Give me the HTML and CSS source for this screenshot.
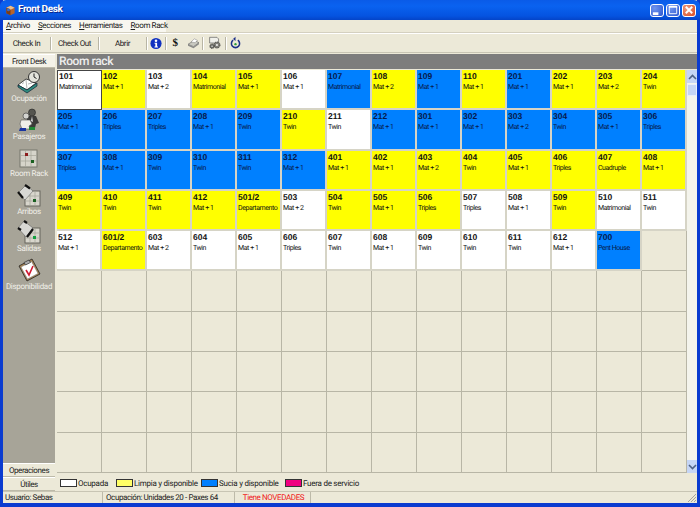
FILE: index.html
```html
<!DOCTYPE html>
<html lang="es">
<head>
<meta charset="utf-8">
<title>Front Desk</title>
<link rel="stylesheet" href="styles.css">
</head>
<body>
<div class="window">
  <header class="titlebar">
    <svg class="app-icon" width="11" height="13" viewBox="0 0 16 16"><path d="M2 4 8 1l6 3v8l-6 3-6-3z" fill="#b8642a"/><path d="M2 4l6 3 6-3-6-3z" fill="#e8c090"/><path d="M8 7v8l-6-3V4z" fill="#7a3d18"/><circle cx="5" cy="7" r="2.200" fill="#3c6bc0"/></svg>
    <span class="title-text">Front Desk</span>
    <div class="win-buttons">
      <span class="win-btn"><svg width="12" height="12" viewBox="0 0 13 13"><rect x="2" y="9" width="6" height="3" fill="#fff"/></svg></span>
      <span class="win-btn"><svg width="12" height="12" viewBox="0 0 13 13"><path d="M2.500 2.500h8v8h-8z" fill="none" stroke="#fff"/><path d="M2 3h9" stroke="#fff" stroke-width="2"/></svg></span>
      <span class="win-btn close"><svg width="12" height="12" viewBox="0 0 13 13"><path d="m3 3 7 7M10 3l-7 7" stroke="#fff" stroke-width="2"/></svg></span>
    </div>
  </header>
  <nav class="menubar">
    <div class="menu-items">
      <span><u>A</u>rchivo</span><span><u>S</u>ecciones</span><span><u>H</u>erramientas</span><span><u>R</u>oom Rack</span>
    </div>
  </nav>
  <div class="toolbar">
    <span class="tool tool-a">Check In</span><i class="sep"></i>
    <span class="tool tool-b">Check Out</span><i class="sep"></i>
    <span class="tool tool-c">Abrir</span><i class="sep"></i>
    <span class="ticon"><svg width="12" height="13" viewBox="0 0 14 14"><circle cx="7" cy="7" r="6.500" fill="#1030c0"/><circle cx="7" cy="3.700" r="1.500" fill="#fff"/><path d="M5.300 6h3v4.500h1v1.200H5.200v-1.200h1V7.200h-.9z" fill="#fff"/></svg></span><i class="sep"></i>
    <span class="ticon dollar">$</span>
    <span class="ticon"><svg width="13" height="11" viewBox="0 0 16 14"><path d="M1 8 9 3l6 3-7 5z" fill="#c8c8c0" stroke="#666" stroke-width=".8"/><path d="M5 5 9 1l4 2-3 3z" fill="#fff" stroke="#777" stroke-width=".6"/><path d="M1 8v2l7 3 7-5V6l-7 5z" fill="#8a8a88"/></svg></span><i class="sep"></i>
    <span class="ticon ticon-wide"><svg width="13" height="14" viewBox="0 0 16 16"><path d="M2 1h9l2 2v5H2z" fill="#f0f0ea" stroke="#555" stroke-width=".8"/><circle cx="11" cy="10.500" r="3.800" fill="#807f78" stroke="#333" stroke-dasharray="1.500 1"/><circle cx="11" cy="10.500" r="1.300" fill="#eee"/><circle cx="5" cy="12" r="2.800" fill="#6a6a64" stroke="#333" stroke-width=".8" stroke-dasharray="1.200 .8"/><circle cx="5" cy="12" r="1" fill="#ddd"/></svg></span><i class="sep"></i>
    <span class="ticon"><svg width="11" height="14" viewBox="0 0 14 16"><path d="M4 4.400a5.200 5.200 0 1 0 6 0" fill="none" stroke="#1c2f88" stroke-width="2"/><path d="M7 0v5.500L3.800 2.800z" fill="#1c2f88"/><circle cx="7" cy="9.500" r="1.500" fill="#2f9c3c"/></svg></span>
  </div>
  <div class="main">
    <aside class="sidebar">
      <div class="tab tab-top">Front Desk</div>
      <div class="side-list">
        <div class="side-item"><svg width="24" height="24" viewBox="0 0 24 24"><path d="M1 15 9 9l3 1 7 3-9 7z" fill="#fff" stroke="#222" stroke-width=".8"/><path d="M1 15v2l9 6 10-7v-3l-10 7z" fill="#2f8c80" stroke="#123" stroke-width=".7"/><path d="m9 10 1 9M5 14l2-1.500M11 14l4-1" stroke="#999" stroke-width=".7"/><circle cx="17" cy="7" r="5.500" fill="#e4e4dc" stroke="#333"/><path d="M17 3.500V7l2.500 1.500" fill="none" stroke="#222"/></svg><span>Ocupación</span></div>
        <div class="side-item"><svg width="24" height="24" viewBox="0 0 24 24"><circle cx="15" cy="4.500" r="3.500" fill="#55554f" stroke="#222" stroke-width=".6"/><path d="M10 8h9l3 7-3 1-1 4h-6l-2-6z" fill="#3a3a38"/><path d="M15 8l1 6-2-1z" fill="#ddd"/><circle cx="9" cy="8" r="3" fill="#d4d4d0" stroke="#333" stroke-width=".6"/><path d="M4 12h9l2 4-3 2 1 3H5l-2-5z" fill="#efefe9" stroke="#555" stroke-width=".6"/><path d="M3 20h6v3H2z" fill="#1a35a0"/><rect x="12" y="19" width="6" height="3" fill="#1e8a34"/></svg><span>Pasajeros</span></div>
        <div class="side-item"><svg width="24" height="24" viewBox="0 0 24 24"><rect x="3" y="5" width="17" height="17" fill="#d6d4ca" stroke="#77766c"/><path d="M3 10.500h17M3 16h17M8.500 5v17M14 5v17" stroke="#a5a398" stroke-width=".7"/><rect x="8" y="8" width="3" height="3" fill="#8c1c1c"/><rect x="14" y="15" width="3" height="3" fill="#186020"/></svg><span>Room Rack</span></div>
        <div class="side-item"><svg width="24" height="24" viewBox="0 0 24 24"><rect x="8" y="8" width="15" height="15" fill="#d8d6cc" stroke="#66655c"/><path d="M8 13h15M8 18h15M13 8v15M18 8v15" stroke="#a5a398" stroke-width=".7"/><path d="M1 10 9 2l7 6-8 9z" fill="#d8d8d4" stroke="#555" stroke-width=".5"/><path d="m8 2 5 3.500M1 9l5 6" stroke="#111" stroke-width="2.200" fill="none"/><rect x="16" y="16" width="3" height="3" fill="#186020"/></svg><span>Arribos</span></div>
        <div class="side-item"><svg width="24" height="24" viewBox="0 0 24 24"><rect x="8" y="8" width="15" height="15" fill="#d8d6cc" stroke="#66655c"/><path d="M8 13h15M8 18h15M13 8v15M18 8v15" stroke="#a5a398" stroke-width=".7"/><path d="M1 8 7 1l9 7-7 9z" fill="#d8d8d4" stroke="#555" stroke-width=".5"/><path d="m1 8 3 2M7 1l3 2M10 17l6-8" stroke="#111" stroke-width="2.200" fill="none"/><rect x="16" y="16" width="3" height="3" fill="#14a040"/></svg><span>Salidas</span></div>
        <div class="side-item"><svg width="24" height="24" viewBox="0 0 24 24"><path d="M2 8 15 1l8 15-13 7z" fill="#a68250" stroke="#222" stroke-width=".8"/><path d="M4 9 14.500 3.500 21 15.500 10.500 21z" fill="#fff" stroke="#777" stroke-width=".5"/><path d="m9 12 3 5 4-9" fill="none" stroke="#d01830" stroke-width="1.600"/><path d="m7 4.500 5-2.500 1.500 2.500-5 2.500z" fill="#aaa" stroke="#222" stroke-width=".6"/></svg><span>Disponibilidad</span></div>
      </div>
      <div class="tab">Operaciones</div>
      <div class="tab">Útiles</div>
    </aside>
    <section class="content">
      <h1 class="panel-title">Room rack</h1>
      <div class="rack-area">
        <div class="rack">
          <div class="cell w first"><b>101</b><span>Matrimonial</span></div>
          <div class="cell y"><b>102</b><span>Mat + 1</span></div>
          <div class="cell w"><b>103</b><span>Mat + 2</span></div>
          <div class="cell y"><b>104</b><span>Matrimonial</span></div>
          <div class="cell y"><b>105</b><span>Mat + 1</span></div>
          <div class="cell w"><b>106</b><span>Mat + 1</span></div>
          <div class="cell b"><b>107</b><span>Matrimonial</span></div>
          <div class="cell y"><b>108</b><span>Mat + 2</span></div>
          <div class="cell b"><b>109</b><span>Mat + 1</span></div>
          <div class="cell y"><b>110</b><span>Mat + 1</span></div>
          <div class="cell b"><b>201</b><span>Mat + 1</span></div>
          <div class="cell y"><b>202</b><span>Mat + 1</span></div>
          <div class="cell y"><b>203</b><span>Mat + 2</span></div>
          <div class="cell y"><b>204</b><span>Twin</span></div>

          <div class="cell b"><b>205</b><span>Mat + 1</span></div>
          <div class="cell b"><b>206</b><span>Triples</span></div>
          <div class="cell b"><b>207</b><span>Triples</span></div>
          <div class="cell b"><b>208</b><span>Mat + 1</span></div>
          <div class="cell b"><b>209</b><span>Twin</span></div>
          <div class="cell y"><b>210</b><span>Twin</span></div>
          <div class="cell w"><b>211</b><span>Twin</span></div>
          <div class="cell b"><b>212</b><span>Mat + 1</span></div>
          <div class="cell b"><b>301</b><span>Mat + 1</span></div>
          <div class="cell b"><b>302</b><span>Mat + 1</span></div>
          <div class="cell b"><b>303</b><span>Mat + 2</span></div>
          <div class="cell b"><b>304</b><span>Twin</span></div>
          <div class="cell b"><b>305</b><span>Mat + 1</span></div>
          <div class="cell b"><b>306</b><span>Triples</span></div>

          <div class="cell b"><b>307</b><span>Triples</span></div>
          <div class="cell b"><b>308</b><span>Mat + 1</span></div>
          <div class="cell b"><b>309</b><span>Twin</span></div>
          <div class="cell b"><b>310</b><span>Twin</span></div>
          <div class="cell b"><b>311</b><span>Twin</span></div>
          <div class="cell b"><b>312</b><span>Mat + 1</span></div>
          <div class="cell y"><b>401</b><span>Mat + 1</span></div>
          <div class="cell y"><b>402</b><span>Mat + 1</span></div>
          <div class="cell y"><b>403</b><span>Mat + 2</span></div>
          <div class="cell y"><b>404</b><span>Twin</span></div>
          <div class="cell y"><b>405</b><span>Mat + 1</span></div>
          <div class="cell y"><b>406</b><span>Triples</span></div>
          <div class="cell y"><b>407</b><span>Cuadruple</span></div>
          <div class="cell y"><b>408</b><span>Mat + 1</span></div>

          <div class="cell y"><b>409</b><span>Twin</span></div>
          <div class="cell y"><b>410</b><span>Twin</span></div>
          <div class="cell y"><b>411</b><span>Twin</span></div>
          <div class="cell y"><b>412</b><span>Mat + 1</span></div>
          <div class="cell y"><b>501/2</b><span>Departamento</span></div>
          <div class="cell w"><b>503</b><span>Mat + 2</span></div>
          <div class="cell y"><b>504</b><span>Twin</span></div>
          <div class="cell y"><b>505</b><span>Mat + 1</span></div>
          <div class="cell y"><b>506</b><span>Triples</span></div>
          <div class="cell w"><b>507</b><span>Triples</span></div>
          <div class="cell w"><b>508</b><span>Mat + 1</span></div>
          <div class="cell y"><b>509</b><span>Twin</span></div>
          <div class="cell w"><b>510</b><span>Matrimonial</span></div>
          <div class="cell w"><b>511</b><span>Twin</span></div>

          <div class="cell w"><b>512</b><span>Mat + 1</span></div>
          <div class="cell y"><b>601/2</b><span>Departamento</span></div>
          <div class="cell w"><b>603</b><span>Mat + 2</span></div>
          <div class="cell w"><b>604</b><span>Twin</span></div>
          <div class="cell w"><b>605</b><span>Mat + 1</span></div>
          <div class="cell w"><b>606</b><span>Triples</span></div>
          <div class="cell w"><b>607</b><span>Twin</span></div>
          <div class="cell w"><b>608</b><span>Mat + 1</span></div>
          <div class="cell w"><b>609</b><span>Twin</span></div>
          <div class="cell w"><b>610</b><span>Twin</span></div>
          <div class="cell w"><b>611</b><span>Twin</span></div>
          <div class="cell w"><b>612</b><span>Mat + 1</span></div>
          <div class="cell b"><b>700</b><span>Pent House</span></div>
          <div class="cell e"></div>

          <div class="cell e"></div><div class="cell e"></div><div class="cell e"></div><div class="cell e"></div><div class="cell e"></div><div class="cell e"></div><div class="cell e"></div><div class="cell e"></div><div class="cell e"></div><div class="cell e"></div><div class="cell e"></div><div class="cell e"></div><div class="cell e"></div><div class="cell e"></div>
          <div class="cell e"></div><div class="cell e"></div><div class="cell e"></div><div class="cell e"></div><div class="cell e"></div><div class="cell e"></div><div class="cell e"></div><div class="cell e"></div><div class="cell e"></div><div class="cell e"></div><div class="cell e"></div><div class="cell e"></div><div class="cell e"></div><div class="cell e"></div>
          <div class="cell e"></div><div class="cell e"></div><div class="cell e"></div><div class="cell e"></div><div class="cell e"></div><div class="cell e"></div><div class="cell e"></div><div class="cell e"></div><div class="cell e"></div><div class="cell e"></div><div class="cell e"></div><div class="cell e"></div><div class="cell e"></div><div class="cell e"></div>
          <div class="cell e"></div><div class="cell e"></div><div class="cell e"></div><div class="cell e"></div><div class="cell e"></div><div class="cell e"></div><div class="cell e"></div><div class="cell e"></div><div class="cell e"></div><div class="cell e"></div><div class="cell e"></div><div class="cell e"></div><div class="cell e"></div><div class="cell e"></div>
          <div class="cell e"></div><div class="cell e"></div><div class="cell e"></div><div class="cell e"></div><div class="cell e"></div><div class="cell e"></div><div class="cell e"></div><div class="cell e"></div><div class="cell e"></div><div class="cell e"></div><div class="cell e"></div><div class="cell e"></div><div class="cell e"></div><div class="cell e"></div>
        </div>
        <div class="scrollbar">
          <span class="arrow"><svg width="9" height="6" viewBox="0 0 9 6"><path d="m1 5 3.500-3.500L8 5" fill="none" stroke="#4d6185" stroke-width="1.600"/></svg></span>
          <span class="thumb"></span>
          <span class="track"></span>
          <span class="arrow"><svg width="9" height="6" viewBox="0 0 9 6"><path d="m1 1 3.500 3.500L8 1" fill="none" stroke="#4d6185" stroke-width="1.600"/></svg></span>
        </div>
      </div>
      <div class="legend">
        <span class="key key-1"><i class="sw sw-w"></i>Ocupada</span>
        <span class="key key-2"><i class="sw sw-y"></i>Limpia y disponible</span>
        <span class="key key-3"><i class="sw sw-b"></i>Sucia y disponible</span>
        <span class="key"><i class="sw sw-p"></i>Fuera de servicio</span>
      </div>
    </section>
  </div>
  <footer class="statusbar">
    <span class="st st-user">Usuario: Sebas</span>
    <span class="st st-occ">Ocupación: Unidades 20 - Paxes 64</span>
    <span class="st st-news">Tiene NOVEDADES</span>
    <span class="st st-rest"><svg class="grip" width="10" height="10" viewBox="0 0 10 10"><path d="M9 1 1 9M9 4 4 9M9 7 7 9" stroke="#a8a698" stroke-width="1"/></svg></span>
  </footer>
</div>
</body>
</html>
```
FILE: styles.css
```css
* { box-sizing: border-box; }
html, body { margin: 0; padding: 0; }
body { font-family: Roboto, "Liberation Sans", sans-serif; font-size: 8px; color: #222; overflow: hidden; text-rendering: geometricPrecision; }
.window { width: 700px; height: 507px; display: flex; flex-direction: column; background: #ece9d8; border-left: 3px solid #0a3bd0; border-right: 3px solid #0a3bd0; border-bottom: 4px solid #0a3bd0; }
.titlebar { height: 20px; margin: 0 -3px; padding: 0 4px 0 5px; display: flex; align-items: center; gap: 2px; background: linear-gradient(#0a5be8, #0a62f0 30%, #0553e0 80%, #0444c8); border-radius: 6px 6px 0 0; flex: none; }
.title-text { color: #fff; font: bold 10px/1 Roboto, sans-serif; letter-spacing: -.4px; text-shadow: 1px 1px 0 #0a2a90; }
.win-buttons { margin-left: auto; display: flex; gap: 2px; }
.win-btn { width: 14px; height: 13px; border: 1px solid #fff; border-radius: 3px; background: radial-gradient(circle at 30% 30%, #6f95ee, #2a55d0); display: flex; align-items: center; justify-content: center; }
.win-btn.close { background: radial-gradient(circle at 30% 30%, #ec9a80, #d84a20); }
.menubar { height: 13px; background: #ece9d8; border-bottom: 1px solid #d4d0c0; flex: none; }
.menu-items { width: 163px; height: 12px; padding-left: 3px; background: #f8f7f0; display: flex; gap: 8px; line-height: 12px; font-size: 8px; letter-spacing: -.4px; white-space: nowrap; }
.toolbar { height: 20px; display: flex; align-items: center; border-top: 1px solid #fff; border-bottom: 1px solid #c8c5b4; flex: none; font-size: 8px; letter-spacing: -.4px; white-space: nowrap; }
.tool { text-align: center; }
.tool-a { width: 47px; }
.tool-b { width: 47px; }
.tool-c { width: 47px; }
.sep { width: 1px; height: 13px; background: #b8b5a5; box-shadow: 1px 0 0 #fff; flex: none; }
.ticon { width: 18px; height: 18px; display: flex; align-items: center; justify-content: center; }
.ticon-wide { width: 22px; }
.dollar { font: bold 11px "Liberation Serif", serif; color: #111; }
.main { flex: 1; min-height: 0; display: flex; }
.sidebar { width: 52px; display: flex; flex-direction: column; padding-top: 1px; flex: none; }
.tab { height: 14px; line-height: 14px; text-align: center; font-size: 8px; letter-spacing: -.4px; border-top: 1px solid #fff; border-bottom: 1px solid #bdbaa9; background: #ece9d8; flex: none; }
.tab-top { background: #f4f2e8; }
.side-list { flex: 1; background: #a7a498; display: flex; flex-direction: column; align-items: center; padding-top: 2px; }
.side-item { height: 37.500px; display: flex; flex-direction: column; align-items: center; color: #f0efe8; font-size: 8px; letter-spacing: -.3px; line-height: 10px; white-space: nowrap; flex: none; }
.side-item svg { display: block; flex: none; }
.content { flex: 1; min-width: 0; display: flex; flex-direction: column; padding: 1px 0 0 2px; }
.panel-title { margin: 0; height: 15px; background: #7d7d7d; color: #eeeeee; font: 500 12px/15px Roboto, sans-serif; letter-spacing: -.4px; padding-left: 2px; flex: none; }
.rack-area { height: 403px; display: flex; flex: none; margin-top: 1px; }
.rack { width: 630px; display: grid; grid-template-columns: repeat(14, 45px); grid-template-rows: repeat(10, 40.300px); background: #ece9d8; }
.cell { border-right: 2px solid #d6d4c6; border-bottom: 2px solid #d6d4c6; padding: 1px 0 0 1px; overflow: hidden; display: flex; flex-direction: column; color: #111; min-width: 0; }
.cell b { font: bold 8.500px/11px "Liberation Sans", sans-serif; white-space: nowrap; }
.cell span { font-size: 7px; letter-spacing: -.45px; line-height: 10px; white-space: nowrap; }
.w { background: #fff; }
.y { background: #ffff00; }
.b { background: #0080ff; color: #07194a; }
.e { background: #ece9d8; border-right: 1px solid #b8b6a6; border-bottom: 1px solid #b8b6a6; }
.first { border: 1px solid #444; padding: 0 0 0 1px; }
.scrollbar { width: 10px; background: #f4f4ec; display: flex; flex-direction: column; }
.arrow { height: 13px; background: #c5d5f5; display: flex; align-items: center; justify-content: center; flex: none; }
.thumb { height: 12px; margin-top: 1px; background: #c5d5f5; border: 1px solid #e8eefc; flex: none; }
.track { flex: 1; }
.legend { height: 16px; margin-top: 2px; padding-left: 3px; display: flex; align-items: center; font-size: 8px; letter-spacing: -.25px; white-space: nowrap; }
.key { display: flex; align-items: center; gap: 1px; }
.key-1 { width: 56px; }
.key-2 { width: 85px; }
.key-3 { width: 84px; }
.sw { width: 17px; height: 8px; border: 1px solid #333; flex: none; }
.sw-w { background: #fff; }
.sw-y { background: #ffff66; }
.sw-b { background: #0080ff; }
.sw-p { background: #f00080; }
.statusbar { height: 12px; display: flex; font-size: 8px; letter-spacing: -.4px; line-height: 12px; border-top: 1px solid #c8c5b4; flex: none; white-space: nowrap; }
.st { border-right: 1px solid #bdbaa9; padding-left: 2px; }
.st-user { width: 100px; }
.st-occ { width: 132px; padding-left: 3px; }
.st-news { width: 76px; color: #f02020; text-align: center; }
.st-rest { flex: 1; border-right: 0; display: flex; justify-content: flex-end; align-items: flex-end; }
.grip { display: block; }
```
